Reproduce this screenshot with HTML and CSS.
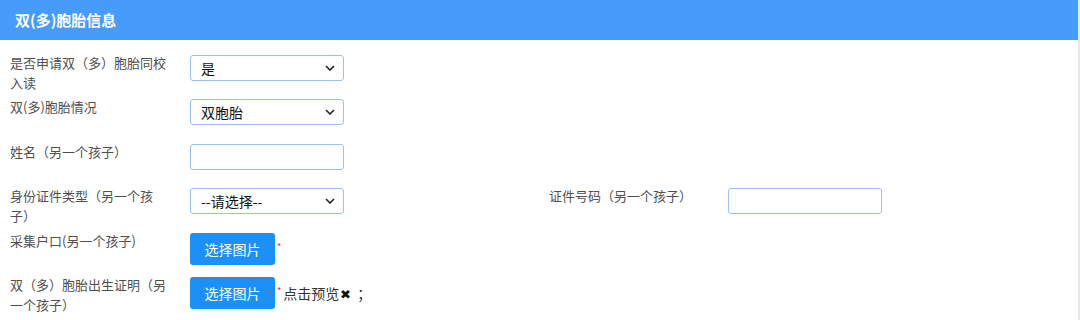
FILE: index.html
```html
<!DOCTYPE html>
<html lang="zh-CN">
<head>
    <meta charset="UTF-8">
    <meta name="viewport" content="width=device-width, initial-scale=1.0">
    <title>双(多)胞胎信息</title>
    <link rel="stylesheet" href="styles.css">
</head>
<body>
    <div class="panel">
        <div class="panel-title">双(多)胞胎信息</div>
        <div class="form">
            <div class="row">
                <div class="label">是否申请双（多）胞胎同校入读</div>
                <div class="field">
                    <select class="ctrl">
                        <option>是</option>
                        <option>否</option>
                    </select>
                </div>
            </div>
            <div class="row">
                <div class="label">双(多)胞胎情况</div>
                <div class="field">
                    <select class="ctrl">
                        <option>双胞胎</option>
                        <option>多胞胎</option>
                    </select>
                </div>
            </div>
            <div class="row">
                <div class="label">姓名（另一个孩子）</div>
                <div class="field">
                    <input class="ctrl" type="text">
                </div>
            </div>
            <div class="row">
                <div class="label">身份证件类型（另一个孩子）</div>
                <div class="field">
                    <select class="ctrl">
                        <option>--请选择--</option>
                    </select>
                </div>
                <div class="label">证件号码（另一个孩子）</div>
                <div class="field">
                    <input class="ctrl" type="text">
                </div>
            </div>
            <div class="row">
                <div class="label">采集户口(另一个孩子)</div>
                <div class="field">
                    <button class="upload">选择图片</button><span class="req">*</span>
                </div>
            </div>
            <div class="row">
                <div class="label">双（多）胞胎出生证明（另一个孩子）</div>
                <div class="field">
                    <button class="upload">选择图片</button><span class="req">*</span>
                    <span class="preview">点击预览<span class="remove">✖</span>；</span>
                </div>
            </div>
        </div>
    </div>
</body>
</html>
```
FILE: styles.css
```css
body {
    margin: 0;
    background-color: #fff;
    font-family: "Noto Sans CJK SC", "Noto Sans", sans-serif;
    font-size: 13px;
    color: #4f4f4f;
}

.panel {
    width: 1078px;
    height: 320px;
    border-right: 2px solid #e6e6e6;
}

.panel-title {
    height: 40px;
    line-height: 40px;
    padding-left: 15px;
    background-color: #479cfb;
    color: #fff;
    font-size: 15px;
    font-weight: bold;
}

.form {
    padding-top: 13px;
}

.row {
    display: grid;
    grid-template-columns: 190px 359px 179px auto;
    height: 44.4px;
}

.label {
    padding-left: 10px;
    width: 160px;
    line-height: 20px;
}

.row .label:nth-child(3) {
    padding-left: 0;
}

.field {
    display: flex;
    align-items: flex-start;
    padding-top: 2px;
}

.ctrl {
    box-sizing: border-box;
    width: 154px;
    height: 26px;
    border: 1px solid #9dc1ee;
    border-radius: 3px;
    background-color: #fff;
    font-family: inherit;
    font-size: 14px;
    color: #111;
    padding: 0 10px;
    outline: none;
}

select.ctrl {
    appearance: none;
    -webkit-appearance: none;
    background-image: url("data:image/svg+xml,%3Csvg xmlns='http://www.w3.org/2000/svg' width='10' height='6' viewBox='0 0 10 6'%3E%3Cpath d='M1 1l4 4 4-4' fill='none' stroke='%23222' stroke-width='1.6'/%3E%3C/svg%3E");
    background-repeat: no-repeat;
    background-position: right 8px center;
}

.upload {
    box-sizing: border-box;
    width: 85px;
    height: 32px;
    border: none;
    border-radius: 3px;
    background-color: #1c90f7;
    color: #fff;
    font-family: inherit;
    font-size: 14px;
    cursor: pointer;
}

.req {
    color: #f5222d;
    font-size: 9px;
    line-height: 1;
    margin: 9px 0 0 2px;
}

.preview {
    margin-left: 2px;
    line-height: 32px;
    font-size: 14px;
    color: #333;
}

.remove {
    color: #111;
    font-size: 13px;
    margin: 0 6px 0 1px;
}
```
